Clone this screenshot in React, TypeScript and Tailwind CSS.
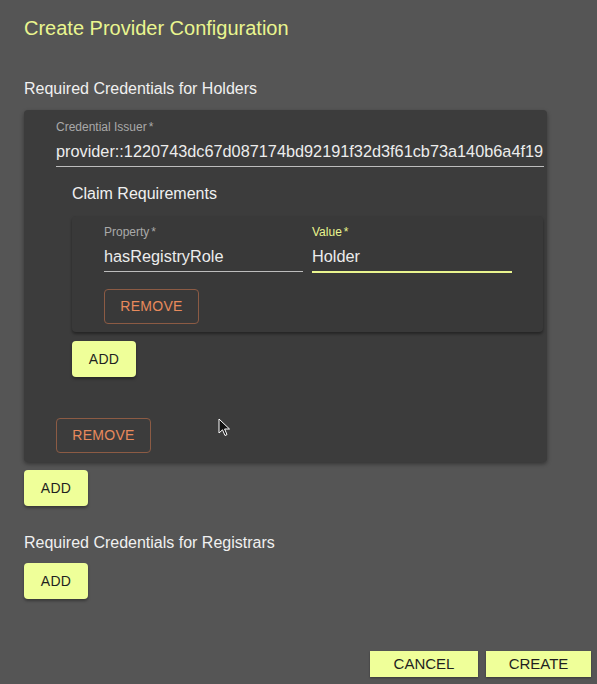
import React from 'react';

const yellowBtn =
  'bg-[#efff99] text-[#1f1f1f] text-[14px] tracking-[0.3px] uppercase rounded shadow-[0_2px_3px_rgba(0,0,0,0.35)] flex items-center justify-center';

const removeBtn =
  'border border-[#8c5b44] text-[#e88a5c] text-[14px] tracking-[0.3px] uppercase rounded flex items-center justify-center';

function Field({
  label,
  value,
  width,
  focused,
}: {
  label: string;
  value: string;
  width: string;
  focused?: boolean;
}) {
  return (
    <div className={`${width} flex flex-col`}>
      <div className={`text-[12px] leading-[14px] ${focused ? 'text-[#eaf58f]' : 'text-[#a9a9a9]'}`}>
        {label}
        <span className="ml-[2px]">*</span>
      </div>
      <div className="mt-[7px] text-[16.3px] leading-[20px] text-[#ececec] whitespace-nowrap overflow-hidden pb-[5px]">
        {value}
      </div>
      <div className={focused ? 'h-[2px] bg-[#eaf58f]' : 'h-[1px] bg-[#bdbdbd]'} />
    </div>
  );
}

export default function App() {
  return (
    <div
      className="relative w-[597px] h-[684px] bg-[#555555] overflow-hidden"
      style={{ fontFamily: '"Liberation Sans", Arial, sans-serif' }}
    >
      <div className="px-6">
        <h1 className="pt-[15px] text-[20px] leading-[26px] text-[#eaf58f]">Create Provider Configuration</h1>

        <h2 className="mt-[38px] text-[16px] leading-[20px] text-[#f0f0f0]">Required Credentials for Holders</h2>

        {/* holder credential card */}
        <div className="mt-[11px] w-[523px] bg-[#3c3c3c] rounded shadow-[0_2px_4px_rgba(0,0,0,0.4)] pl-8 pr-[3px] pt-[10px] pb-[9px]">
          <Field
            label="Credential Issuer"
            value="provider::1220743dc67d087174bd92191f32d3f61cb73a140b6a4f19"
            width="w-[488px]"
          />

          <div className="pl-4">
            <h3 className="mt-[17px] text-[16px] leading-[20px] text-[#f0f0f0]">Claim Requirements</h3>

            {/* claim card */}
            <div className="mt-[12px] w-[471px] bg-[#393939] rounded shadow-[0_2px_3px_rgba(0,0,0,0.4)] pl-8 pt-[9px] pb-[8px]">
              <div className="flex items-start gap-[9px]">
                <Field label="Property" value="hasRegistryRole" width="w-[199px]" />
                <Field label="Value" value="Holder" width="w-[200px]" focused />
              </div>
              <button className={`${removeBtn} mt-[16px] w-[95px] h-[35px]`}>Remove</button>
            </div>

            <button className={`${yellowBtn} mt-[9px] w-[64px] h-[36px]`}>Add</button>
          </div>

          <button className={`${removeBtn} mt-[41px] w-[95px] h-[35px]`}>Remove</button>
        </div>

        <button className={`${yellowBtn} mt-[8px] w-[64px] h-[36px]`}>Add</button>

        <h2 className="mt-[27px] text-[16px] leading-[20px] text-[#f0f0f0]">Required Credentials for Registrars</h2>

        <button className={`${yellowBtn} mt-[10px] w-[64px] h-[36px]`}>Add</button>
      </div>

      <div className="flex justify-end gap-2 pr-[6px] mt-[52px]">
        <button className="bg-[#efff99] text-[#1f1f1f] text-[15px] uppercase w-[108px] h-[26px] shadow-[0_1px_2px_rgba(0,0,0,0.35)]">
          Cancel
        </button>
        <button className="bg-[#efff99] text-[#1f1f1f] text-[15px] uppercase w-[105px] h-[26px] shadow-[0_1px_2px_rgba(0,0,0,0.35)]">
          Create
        </button>
      </div>

      {/* mouse pointer */}
      <svg className="absolute left-[218px] top-[418px]" width="13" height="19" viewBox="0 0 13 19">
        <path d="M1 1 L1 15 L4.5 11.8 L7 17.5 L9 16.6 L6.6 11 L11.5 11 Z" fill="#111" stroke="#fff" strokeWidth="1" />
      </svg>
    </div>
  );
}
